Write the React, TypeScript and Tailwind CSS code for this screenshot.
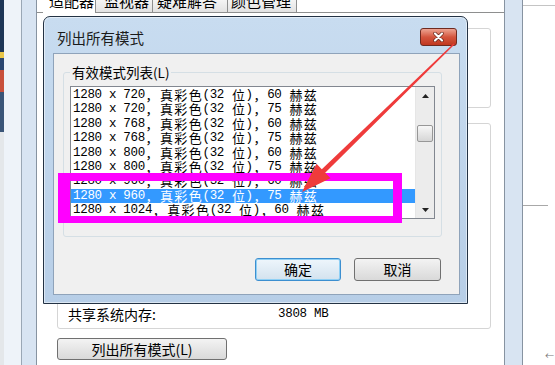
import React from "react";

const CJK = /[\u2e80-\u9fff\uff00-\uffef]/;

const modes = [
  "1280 x 720，真彩色(32 位)，60 赫兹",
  "1280 x 720，真彩色(32 位)，75 赫兹",
  "1280 x 768，真彩色(32 位)，60 赫兹",
  "1280 x 768，真彩色(32 位)，75 赫兹",
  "1280 x 800，真彩色(32 位)，60 赫兹",
  "1280 x 800，真彩色(32 位)，75 赫兹",
  "1280 x 960，真彩色(32 位)，60 赫兹",
  "1280 x 960，真彩色(32 位)，75 赫兹",
  "1280 x 1024，真彩色(32 位)，60 赫兹",
];

// SimSun-like grid: half-width cells for ASCII, full-width for CJK
function Cells({ text }: { text: string }) {
  return (
    <>
      {Array.from(text).map((ch, i) =>
        CJK.test(ch) ? (
          <span
            key={i}
            className="inline-block w-[14.4px] shrink-0 text-center font-['Noto_Sans_CJK_SC',sans-serif] text-[13px] leading-[14.4px]"
          >
            {ch}
          </span>
        ) : (
          <span
            key={i}
            className="inline-block w-[7.2px] shrink-0 whitespace-pre text-center font-['Liberation_Mono',monospace] text-[12.5px] leading-[14.4px]"
          >
            {ch}
          </span>
        )
      )}
    </>
  );
}

function Tri({ up }: { up?: boolean }) {
  return (
    <svg width="7" height="4" viewBox="0 0 7 4">
      <polygon points={up ? "0,4 3.5,0 7,4" : "0,0 7,0 3.5,4"} fill="#222" />
    </svg>
  );
}

function Page() {
  return (
    <div className="flex w-[468px] flex-col border-r border-[#8793a1] bg-white">
      {/* tabs, cut off at the top */}
      <div className="flex h-[13px] text-[15px]">
        <div className="w-[6px] border-b border-[#8e8f8f]" />
        <div className="h-[13px] w-[53px] overflow-hidden border-r border-[#8e8f8f] bg-white pl-[6px]">
          <div className="-mt-[7px] leading-[15px]">适配器</div>
        </div>
        <div className="h-[13px] w-[57px] overflow-hidden border-r border-b border-[#8e8f8f] bg-linear-to-b from-[#f4f4f4] to-[#e2e2e2] pl-[8px]">
          <div className="-mt-[7px] leading-[15px]">监视器</div>
        </div>
        <div className="h-[13px] w-[75px] overflow-hidden border-r border-b border-[#8e8f8f] bg-linear-to-b from-[#f4f4f4] to-[#e2e2e2] pl-[4px]">
          <div className="-mt-[7px] leading-[15px]">疑难解答</div>
        </div>
        <div className="h-[13px] w-[69px] overflow-hidden border-r border-b border-[#8e8f8f] bg-linear-to-b from-[#f4f4f4] to-[#e2e2e2] pl-[3px]">
          <div className="-mt-[7px] leading-[15px]">颜色管理</div>
        </div>
        <div className="flex-1 border-b border-[#8e8f8f]" />
      </div>

      <div className="flex flex-col pl-[20px] pr-[13px] pt-[15px]">
        <div className="h-[80px] rounded-[3px] border border-[#d5d5d5]" />
        <div className="mt-[15px] flex h-[206px] flex-col justify-end rounded-[3px] border border-[#d5d5d5] pb-[5px] pl-[10px]">
          <div className="flex h-[18px] items-center">
            <div className="w-[210px] text-[14px] leading-[18px]">共享系统内存:</div>
            <div className="flex">
              <Cells text="3808 MB" />
            </div>
          </div>
        </div>
        <button className="mt-[9px] flex h-[22px] w-[170px] items-center justify-center rounded-[3px] border border-[#707070] bg-linear-to-b from-[#f3f3f3] to-[#d9d9d9] text-[14px] leading-[18px]">
          列出所有模式(L)
        </button>
      </div>
    </div>
  );
}

function Client() {
  return (
    <div className="flex flex-1 flex-col border border-[#8fa3ba] bg-[#f0f0f0]">
      <fieldset className="ml-[9px] mt-[10px] w-[379px] rounded-[3px] border border-[#d5dfe5] pb-[17px]">
        <legend className="ml-[6px] px-[2px] text-[13.5px] leading-[16px]">有效模式列表(L)</legend>
        <div className="ml-[6px] mt-[6px] flex h-[133px] w-[365px] border border-[#828790] bg-white">
          <div className="flex-1 overflow-hidden pt-[1px]">
            {modes.map((m, i) => (
              <div
                key={i}
                className={
                  "flex h-[14.4px] items-center pl-[2px] " +
                  (i === 7 ? "bg-[#3399ff] text-white" : "text-black")
                }
              >
                <Cells text={m} />
              </div>
            ))}
          </div>
          <div className="flex w-[19px] flex-col border-l border-[#e6e6e6] bg-[#ececec]">
            <div className="flex h-[17px] items-center justify-center">
              <Tri up />
            </div>
            <div className="mx-[1px] mt-[21px] h-[17px] rounded-[2px] border border-[#979797] bg-linear-to-b from-[#f7f7f7] to-[#d6d6d6]" />
            <div className="flex-1" />
            <div className="flex h-[17px] items-center justify-center">
              <Tri />
            </div>
          </div>
        </div>
      </fieldset>

      <div className="mt-[21px] flex justify-end gap-[13px] pr-[18px] text-[14px]">
        <button className="flex h-[23px] w-[86px] items-center justify-center rounded-[3px] border border-[#3c8fd0] bg-linear-to-b from-[#eef6fc] to-[#d3e2ee] shadow-[inset_0_0_0_1px_#8fd0f5]">
          确定
        </button>
        <button className="flex h-[23px] w-[87px] items-center justify-center rounded-[3px] border border-[#707070] bg-linear-to-b from-[#f3f3f3] to-[#d9d9d9]">
          取消
        </button>
      </div>
    </div>
  );
}

function Dialog() {
  return (
    <div className="absolute left-[43px] top-[16px] flex h-[288px] w-[425px] flex-col rounded-t-[7px] border border-[#233244] bg-linear-to-b from-[#c8dcf0] to-[#b7cee7] pb-[8px] pl-[9px] pr-[7px] shadow-[inset_0_0_0_1px_rgba(255,255,255,0.5)]">
      <div className="flex h-[36px] items-start justify-between pt-[11px]">
        <div className="pl-[4px] text-[14.5px] leading-[20px] text-[#1b1b1b]">列出所有模式</div>
        <div className="mr-[3px] flex h-[18px] w-[37px] items-center justify-center rounded-[3px] border border-[#6e2a20] bg-linear-to-b from-[#eca392] via-[#d4553e] to-[#c0371f]">
          <svg width="13" height="10" viewBox="0 0 13 10">
            <path d="M3 1.5 L10 8.5 M10 1.5 L3 8.5" stroke="#5a1a10" strokeWidth="3.4" strokeLinecap="round" />
            <path d="M3 1.5 L10 8.5 M10 1.5 L3 8.5" stroke="#fff" strokeWidth="2.2" strokeLinecap="round" />
          </svg>
        </div>
      </div>
      <Client />
    </div>
  );
}

export default function App() {
  return (
    <div className="relative flex h-[365px] w-[555px] overflow-hidden bg-white font-['Noto_Sans_CJK_SC',sans-serif] text-black">
      {/* edge of the window behind */}
      <div className="flex w-[4px] flex-col">
        <div className="h-[52px] bg-[#1d3556]" />
        <div className="h-[6px] bg-[#e8c64a]" />
        <div className="h-[12px] bg-[#2a4670]" />
        <div className="h-[22px] bg-[#c8503c]" />
        <div className="h-[40px] bg-[#3a5578]" />
        <div className="flex-1 bg-[#e4e7ea]" />
      </div>
      <div className="w-[18px] border-r border-[#9aa7b5] bg-[#eef3f9]" />
      <div className="w-[15px] border-r border-[#8793a1] bg-[#d8e4f2]" />
      <Page />
      <div className="w-[18px] border-r border-[#8793a1] bg-[#d8e4f2]" />
      <div className="flex w-[32px] flex-col bg-white">
        <div className="h-[5px]" />
        <div className="h-[1px] bg-[#c4c4c4]" />
        <div className="h-[199px]" />
        <div className="h-[1px] w-[25px] bg-[#a8a8a8]" />
        <div className="flex flex-1 items-end justify-end pb-[4px] pr-[1px] text-[9px] leading-[10px] text-[#777]">
          ←
        </div>
      </div>

      <Dialog />

      {/* annotations */}
      <div className="pointer-events-none absolute left-[58px] top-[173px] h-[50px] w-[344px] border-b-[7px] border-l-[12px] border-r-[9px] border-t-[8px] border-[#ff00ff]" />
      <svg className="pointer-events-none absolute left-0 top-0" width="555" height="365">
        <polygon
          points="302,192 316.5,163.8 321.8,169.2 453.5,43.5 454.5,44.5 325.2,172.8 330.5,178.2"
          fill="#ef3b3b"
        />
      </svg>
    </div>
  );
}
